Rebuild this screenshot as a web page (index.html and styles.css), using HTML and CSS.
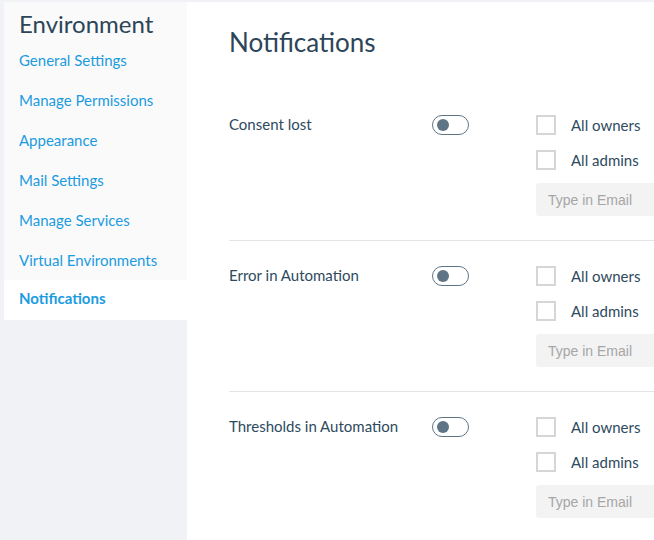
FILE: index.html
```html
<!DOCTYPE html>
<html>
<head>
    <meta name="viewport" content="width=device-width, initial-scale=1.0">
    <title>Environment - Notifications</title>
    <link rel="stylesheet" href="styles.css">
</head>
<body>
    <div class="layout">
        <aside class="sidebar">
            <nav class="side-nav">
                <h2 class="side-title">Environment</h2>
                <a class="side-link" href="#">General Settings</a>
                <a class="side-link" href="#">Manage Permissions</a>
                <a class="side-link" href="#">Appearance</a>
                <a class="side-link" href="#">Mail Settings</a>
                <a class="side-link" href="#">Manage Services</a>
                <a class="side-link" href="#">Virtual Environments</a>
                <a class="side-link active" href="#">Notifications</a>
            </nav>
        </aside>

        <main class="content">
            <h1 class="page-title">Notifications</h1>

            <section class="notify-row">
                <div class="notify-label">Consent lost</div>
                <div class="notify-toggle"><span class="toggle"><span class="knob"></span></span></div>
                <div class="notify-targets">
                    <label class="check"><input type="checkbox"><span>All owners</span></label>
                    <label class="check"><input type="checkbox"><span>All admins</span></label>
                    <input class="email" type="text" placeholder="Type in Email">
                </div>
            </section>

            <section class="notify-row">
                <div class="notify-label">Error in Automation</div>
                <div class="notify-toggle"><span class="toggle"><span class="knob"></span></span></div>
                <div class="notify-targets">
                    <label class="check"><input type="checkbox"><span>All owners</span></label>
                    <label class="check"><input type="checkbox"><span>All admins</span></label>
                    <input class="email" type="text" placeholder="Type in Email">
                </div>
            </section>

            <section class="notify-row">
                <div class="notify-label">Thresholds in Automation</div>
                <div class="notify-toggle"><span class="toggle"><span class="knob"></span></span></div>
                <div class="notify-targets">
                    <label class="check"><input type="checkbox"><span>All owners</span></label>
                    <label class="check"><input type="checkbox"><span>All admins</span></label>
                    <input class="email" type="text" placeholder="Type in Email">
                </div>
            </section>
        </main>
    </div>
</body>
</html>
```

FILE: styles.css
```css
* {
    box-sizing: border-box;
    margin: 0;
    padding: 0;
}

html, body {
    height: 100%;
}

body {
    font-family: Lato, "Noto Sans", sans-serif;
    background-color: #f0f2f5;
    padding-top: 2px;
    overflow: hidden;
    color: #2e4a5e;
}

.layout {
    display: flex;
    height: 100%;
}

/* sidebar */
.sidebar {
    width: 183px;
    margin-left: 4px;
    flex-shrink: 0;
}

.side-nav {
    background-color: #fafafa;
}

.side-title {
    font-size: 24px;
    font-weight: 400;
    line-height: 30px;
    height: 38px;
    padding: 7px 0 0 15px;
    color: #2c4558;
}

.side-link {
    display: block;
    height: 40px;
    line-height: 40px;
    padding-left: 15px;
    font-size: 15px;
    color: #1b9be0;
    text-decoration: none;
}

.side-link.active {
    background-color: white;
    font-weight: bold;
    line-height: 36px;
}

/* main */
.content {
    flex: 1;
    min-width: 0;
    background-color: white;
    padding-left: 42px;
    overflow: hidden;
}

.page-title {
    font-size: 26px;
    font-weight: 400;
    line-height: 32px;
    padding-top: 24px;
    height: 87px;
    color: #2c4558;
}

.notify-row {
    display: flex;
    align-items: flex-start;
    padding: 25px 0 24px;
    border-top: 1px solid #e2e5e8;
}

.notify-row:first-of-type {
    border-top-color: transparent;
}

.notify-label {
    width: 203px;
    flex-shrink: 0;
    font-size: 15px;
    line-height: 19px;
}

.notify-toggle {
    width: 104px;
    flex-shrink: 0;
}

.toggle {
    display: block;
    width: 37px;
    height: 20px;
    border: 1px solid #5f7585;
    border-radius: 10px;
    padding: 3px 0 0 4px;
}

.knob {
    display: block;
    width: 12px;
    height: 12px;
    border-radius: 50%;
    background-color: #5f7585;
}

.notify-targets {
    display: flex;
    flex-direction: column;
    flex-shrink: 0;
}

.check {
    display: flex;
    align-items: center;
    gap: 15px;
    height: 20px;
    margin-bottom: 15px;
    font-size: 15px;
}

.check input {
    -webkit-appearance: none;
    appearance: none;
    width: 20px;
    height: 20px;
    border: 2px solid #d6d6d6;
    background-color: white;
}

.check + .check {
    margin-bottom: 13px;
}

.email {
    width: 220px;
    height: 33px;
    border: none;
    border-radius: 3px;
    background-color: #f3f3f3;
    padding-left: 12px;
    font-family: "Liberation Sans", Arial, sans-serif;
    font-size: 14px;
}

.email::placeholder {
    color: #a6a6a6;
}
```
